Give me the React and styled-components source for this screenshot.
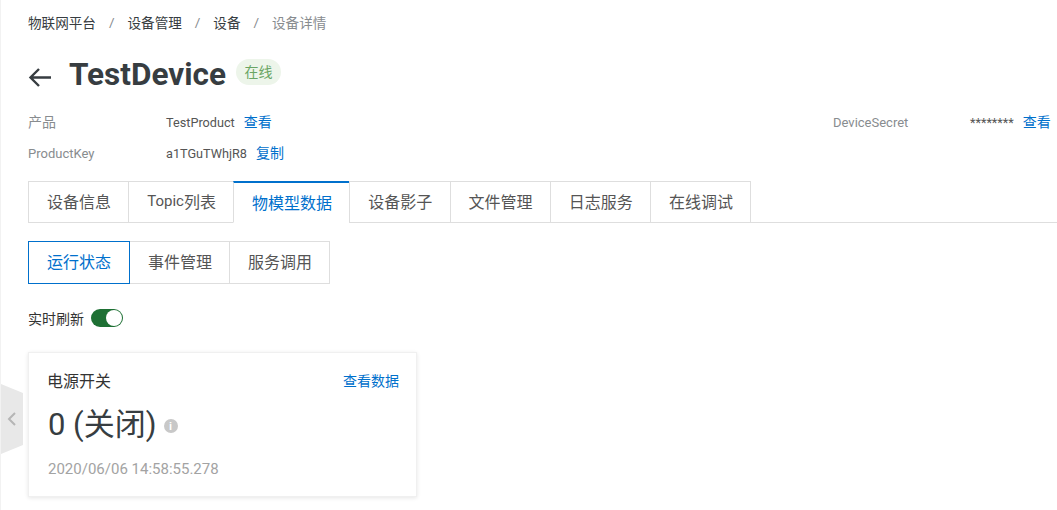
import React from 'react'
import styled, { createGlobalStyle } from 'styled-components'

const FONT = `Roboto, "Noto Sans CJK SC", sans-serif`

const GlobalStyle = createGlobalStyle`
  html, body {
    margin: 0;
    padding: 0;
    background: #fff;
  }
  body {
    font-family: ${FONT};
    overflow: hidden;
  }
`

const subTabs = ['运行状态', '事件管理', '服务调用']

const App = () => {
  const topTabs = [
    '设备信息',
    <><TabLatin>Topic</TabLatin>列表</>,
    '物模型数据',
    '设备影子',
    '文件管理',
    '日志服务',
    '在线调试',
  ]

  return (
    <Page>
      <GlobalStyle />
      <Collapse>
        <svg width="10" height="16" viewBox="0 0 10 16">
          <path d="M8 2 L2 8 L8 14" fill="none" stroke="#b5b5b5" strokeWidth="2" />
        </svg>
      </Collapse>
      <Breadcrumb>
        <Crumb>物联网平台</Crumb>
        <Slash>/</Slash>
        <Crumb>设备管理</Crumb>
        <Slash>/</Slash>
        <Crumb>设备</Crumb>
        <Slash>/</Slash>
        <Crumb $current>设备详情</Crumb>
      </Breadcrumb>
      <TitleRow>
        <svg width="24" height="20" viewBox="0 0 24 20">
          <path d="M23 10.5 H3 M11 2 L2.5 10.5 L11 19" fill="none" stroke="#373d41" strokeWidth="2.4" />
        </svg>
        <Title>TestDevice</Title>
        <Status>在线</Status>
      </TitleRow>
      <Info>
        <InfoLabel $cjk>产品</InfoLabel>
        <InfoValue>TestProduct<Link>查看</Link></InfoValue>
        <InfoLabel>DeviceSecret</InfoLabel>
        <InfoValue>********<Link>查看</Link></InfoValue>
        <InfoLabel>ProductKey</InfoLabel>
        <InfoValue>a1TGuTWhjR8<Link>复制</Link></InfoValue>
      </Info>
      <Tabs>
        {topTabs.map((tab, i) => (
          <Tab key={i} $active={i === 2}>{tab}</Tab>
        ))}
      </Tabs>
      <SubTabs>
        {subTabs.map((tab, i) => (
          <SubTab key={tab} $active={i === 0}>{tab}</SubTab>
        ))}
      </SubTabs>
      <RefreshRow>
        实时刷新
        <Switch />
      </RefreshRow>
      <Card>
        <CardHead>
          <CardTitle>电源开关</CardTitle>
          <Link>查看数据</Link>
        </CardHead>
        <CardValue>
          0 (关闭)
          <InfoDot>i</InfoDot>
        </CardValue>
        <CardTime>2020/06/06 14:58:55.278</CardTime>
      </Card>
    </Page>
  )
}

export default App

const Page = styled.div`
  position: relative;
  width: 1057px;
  height: 510px;
  box-sizing: border-box;
  padding: 13px 5px 0 27px;
  overflow: hidden;
  background: #fff;
  border-left: 1px solid #f2f2f2;
  &::before {
    content: '';
    position: absolute;
    left: -1px;
    top: 207px;
    width: 1px;
    height: 45px;
    background: #e2e2e2;
  }
`
const Collapse = styled.div`
  position: absolute;
  left: 0;
  top: 384px;
  width: 22px;
  height: 70px;
  background: #e8e8e8;
  clip-path: polygon(0 0, 100% 13%, 100% 87%, 0 100%);
  display: flex;
  align-items: center;
  justify-content: center;
`
const Breadcrumb = styled.div`
  display: flex;
  align-items: center;
  height: 18px;
  font-size: 13.6px;
`
const Crumb = styled.span`
  color: ${(p) => (p.$current ? '#888c8f' : '#373d41')};
`
const Slash = styled.span`
  width: 31.5px;
  text-align: center;
  color: #888c8f;
`
const TitleRow = styled.div`
  display: flex;
  align-items: center;
  margin-top: 21px;
  height: 44px;
  svg {
    margin-top: 6px;
  }
`
const Title = styled.div`
  margin-left: 17px;
  font-size: 31.5px;
  font-weight: 700;
  color: #373d41;
`
const Status = styled.span`
  margin-left: 10px;
  margin-top: -4px;
  width: 45px;
  height: 26px;
  line-height: 26px;
  text-align: center;
  border-radius: 13px;
  font-size: 14px;
  color: #6aa564;
  background: #edf5ea;
`
const Info = styled.div`
  display: grid;
  grid-template-columns: 138px 667px 137px 1fr;
  grid-auto-rows: 31px;
  align-items: center;
  margin-top: 9px;
  font-size: 12.7px;
  white-space: nowrap;
`
const InfoLabel = styled.div`
  font-size: ${(p) => (p.$cjk ? '14px' : '13px')};
  margin-top: ${(p) => (p.$cjk ? '0' : '4px')};
  color: #888c8f;
`
const InfoValue = styled.div`
  color: #555;
`
const Link = styled.a`
  margin-left: 9px;
  font-size: 14px;
  color: #0070cc;
`
const Tabs = styled.div`
  display: flex;
  margin-top: 14px;
  margin-right: -5px;
  height: 42px;
  box-sizing: border-box;
  border-bottom: 1px solid #dedede;
`
const Tab = styled.div`
  height: 42px;
  box-sizing: border-box;
  padding: 0 17.2px 2px 18px;
  display: flex;
  align-items: center;
  font-size: 16px;
  margin-left: -1px;
  color: ${(p) => (p.$active ? '#0070cc' : '#555')};
  background: #fff;
  border: 1px solid #dedede;
  border-top: ${(p) => (p.$active ? '2px solid #0070cc' : '1px solid #dedede')};
  border-bottom: ${(p) => (p.$active ? '1px solid #fff' : '1px solid #dedede')};
  &:first-child {
    margin-left: 0;
  }
`
const TabLatin = styled.span`
  font-size: 15px;
`
const SubTabs = styled.div`
  display: flex;
  margin-top: 18px;
`
const SubTab = styled.div`
  position: relative;
  z-index: ${(p) => (p.$active ? 1 : 0)};
  height: 43px;
  box-sizing: border-box;
  padding: 0 17px 4px 18px;
  margin-left: -1px;
  display: flex;
  align-items: center;
  font-size: 16px;
  color: ${(p) => (p.$active ? '#0070cc' : '#555')};
  border: 1px solid ${(p) => (p.$active ? '#0070cc' : '#dedede')};
  &:first-child {
    margin-left: 0;
    padding-right: 18px;
  }
`
const RefreshRow = styled.div`
  display: flex;
  align-items: center;
  gap: 7px;
  margin-top: 24px;
  height: 20px;
  font-size: 14px;
  color: #333;
`
const Switch = styled.span`
  position: relative;
  width: 32px;
  height: 18px;
  border-radius: 9px;
  background: #1e7034;
  &::after {
    content: '';
    position: absolute;
    right: 1px;
    top: 1px;
    width: 16px;
    height: 16px;
    border-radius: 50%;
    background: #fff;
  }
`
const Card = styled.div`
  width: 389px;
  height: 145px;
  box-sizing: border-box;
  margin-top: 24px;
  padding: 15px 17px 0 18px;
  border: 1px solid #f0f0f0;
  box-shadow: 0 1px 4px rgba(0, 0, 0, 0.1);
  background: #fff;
`
const CardHead = styled.div`
  display: flex;
  align-items: center;
  justify-content: space-between;
  height: 24px;
`
const CardTitle = styled.div`
  font-size: 16px;
  color: #333;
`
const CardValue = styled.div`
  display: flex;
  align-items: center;
  margin: 6px 0 0 1px;
  height: 46px;
  font-size: 31px;
  color: #373d41;
`
const InfoDot = styled.span`
  width: 14px;
  height: 14px;
  margin-left: 7px;
  margin-top: 10px;
  border-radius: 50%;
  background: #c8c8c8;
  color: #fff;
  font-family: "Liberation Sans", sans-serif;
  font-size: 11px;
  font-weight: 700;
  line-height: 14px;
  text-align: center;
`
const CardTime = styled.div`
  margin: 15px 0 0 1px;
  height: 20px;
  line-height: 20px;
  font-size: 15px;
  color: #a3a3a3;
`
